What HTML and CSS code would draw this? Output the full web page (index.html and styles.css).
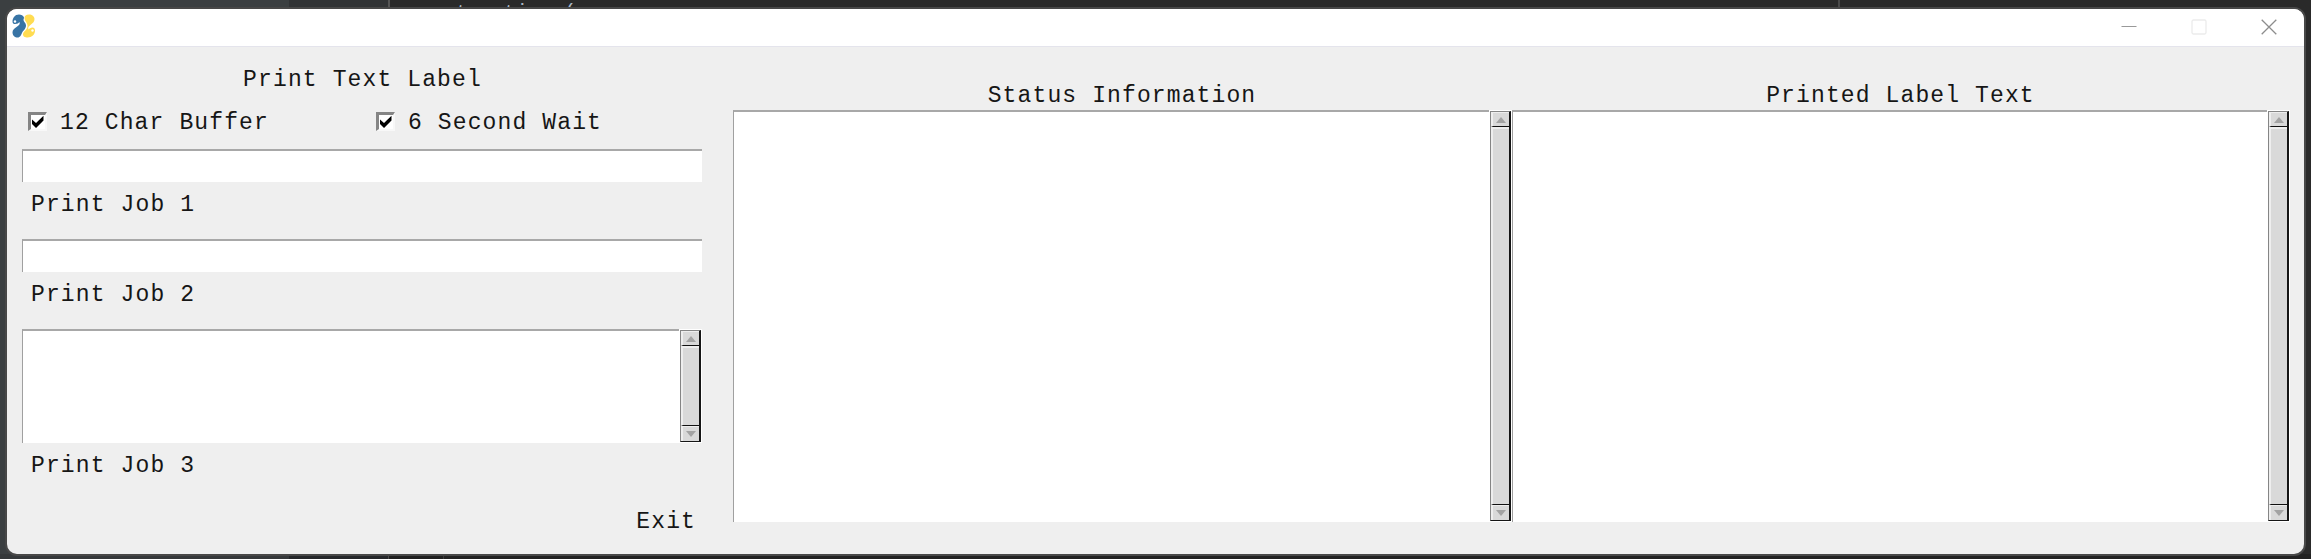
FILE: index.html
```
<!DOCTYPE html>
<html lang="en">
<head>
<meta charset="utf-8">
<title>Print Text Label</title>
<link rel="stylesheet" href="styles.css">
</head>
<body>
<div class="desktop">
  <div class="editor-peek" aria-hidden="true"><span class="gutter">27</span><span class="code">extractions(</span></div>
  <div class="editor-foot"></div>
  <main class="window">
    <header class="titlebar">
      <svg class="logo" width="24" height="24" viewBox="0 0 24 24">
        <path d="M7 .5C3 .5.5 4 .5 7.500c0 2 1.200 2.500 2.500 2.500 2.500 0 3.500-1 4.500-2 .8 2-.5 3.500-3 5C2 14.500.5 16 .5 18.500c0 3 2.500 5 5 5 3 0 3.500-2.500 4.500-4.500 1-2.500 4-4 4-7.500C14 9 11.500 8 11.500 6c0-1 .5-1.500.5-2.500C11.500 1.500 9 .5 7 .5Z" fill="#3874a5"/>
        <path d="M17 .5c-3 0-4.500 1.500-4.500 3.500 0 3 3 4.500 3 8 0 4-4 5-4.500 8-.3 2.500 2 3.500 4.500 3.500 4.500 0 7.500-3 7.500-7 0-2-1-3-2.500-3-2 0-3 1-4 2-1-2 .5-3.500 2.500-5 2-1.500 3.500-3 3.500-5.500C22.500 2.500 20 .5 17 .5Z" fill="#ffdc52"/>
        <circle cx="3" cy="7.500" r="1.200" fill="#fff"/>
        <circle cx="20.500" cy="16.500" r="1.200" fill="#fff"/>
      </svg>
      <div class="controls">
        <svg width="16" height="16" viewBox="0 0 16 16"><path d="M.5 7.500h15" stroke="#999"/></svg>
        <svg width="16" height="16" viewBox="0 0 16 16"><rect x="1" y="1" width="14" height="14" rx="1.500" fill="none" stroke="#ebebeb" stroke-width="1.300"/></svg>
        <svg width="16" height="16" viewBox="0 0 16 16"><path d="m.7.700 14.600 14.600M15.300.700.700 15.300" stroke="#8d8d8d" stroke-width="1.300"/></svg>
      </div>
    </header>
    <div class="content">
      <section class="form">
        <h1 class="heading">Print Text Label</h1>
        <div class="options">
          <div class="option"><span class="check"><svg width="14" height="14" viewBox="0 0 14 14"><path d="M1 4.500v4.500L5 13 12.500 5.500V.8L5 8Z" fill="#000"/></svg></span><span>12 Char Buffer</span></div>
          <div class="option"><span class="check"><svg width="14" height="14" viewBox="0 0 14 14"><path d="M1 4.500v4.500L5 13 12.500 5.500V.8L5 8Z" fill="#000"/></svg></span><span>6 Second Wait</span></div>
        </div>
        <div class="entry"></div>
        <div class="job">Print Job 1</div>
        <div class="entry"></div>
        <div class="job">Print Job 2</div>
        <div class="pane multiline">
          <div class="area"></div>
          <div class="scroll"><span class="arrow"><i class="up"></i></span><span class="thumb"></span><span class="arrow last"><i class="down"></i></span></div>
        </div>
        <div class="job">Print Job 3</div>
        <div class="exit">Exit</div>
      </section>
      <section class="column">
        <h2 class="heading">Status Information</h2>
        <div class="pane">
          <div class="area"></div>
          <div class="scroll"><span class="arrow"><i class="up"></i></span><span class="thumb"></span><span class="arrow last"><i class="down"></i></span></div>
        </div>
      </section>
      <section class="column">
        <h2 class="heading">Printed Label Text</h2>
        <div class="pane">
          <div class="area"></div>
          <div class="scroll"><span class="arrow"><i class="up"></i></span><span class="thumb"></span><span class="arrow last"><i class="down"></i></span></div>
        </div>
      </section>
    </div>
  </main>
</div>
</body>
</html>
```
FILE: styles.css
```
* { box-sizing: border-box; }
body { margin: 0; }
.desktop {
  position: relative;
  width: 2311px;
  height: 559px;
  padding: 7px 5px 3px;
  overflow: hidden;
  background: linear-gradient(90deg, #3b3f41 289px, #313335 289px 388px, #555 388px 390px, #2a2a2a 390px 1838px, #4a4a4a 1838px 1840px, #2a2a2a 1840px);
}
/* Editor behind the window, visible only as a thin strip */
.editor-peek {
  position: absolute;
  left: 310px;
  top: 2px;
  display: flex;
  gap: 98px;
  font: 20px/22px "Liberation Mono", monospace;
  color: #a9b7c6;
}
.gutter { color: #606366; padding-top: 3px; }
.editor-foot {
  position: absolute;
  left: 0;
  right: 0;
  bottom: 0;
  height: 5px;
  background: linear-gradient(90deg, #35383a 289px, #25272a 289px 388px, #4a4a4a 388px 389px, #202020 389px 443px, #3a3a3a 443px 444px, #222 444px);
}
.window {
  position: relative;
  display: flex;
  flex-direction: column;
  width: 2301px;
  height: 549px;
  border: 2px solid #484848;
  border-radius: 12px;
  background: #efefef;
  overflow: hidden;
  font: 23px/26px "Courier New", "Liberation Mono", monospace;
  letter-spacing: 1.12px;
  color: #161616;
}
.titlebar {
  display: flex;
  flex: none;
  justify-content: space-between;
  align-items: flex-start;
  height: 38px;
  padding: 5px 27px 0 5px;
  background: #fff;
  border-bottom: 1px solid #e4e4ec;
}
.controls { display: flex; gap: 54px; padding-top: 5px; }
.controls svg, .logo { display: block; }
.content { display: flex; }
.form { width: 680px; margin: 0 31px 0 15px; }
.heading { margin: 0; font: inherit; text-align: center; white-space: pre; }
.form .heading { padding: 20px 0 0 1px; height: 62px; }
.options { display: flex; height: 40px; padding: 1px 0 0 6px; }
.option { display: flex; flex: none; width: 348px; gap: 13px; white-space: pre; }
.check {
  flex: none;
  width: 19px;
  height: 19px;
  margin-top: 2px;
  background: #fff;
  border: solid;
  border-width: 3px 2px 2px 3px;
  border-color: #858585 #f8f8f8 #f8f8f8 #858585;
}
.check svg { display: block; }
.entry, .area {
  background: #fff;
  border-top: 2px solid #a8a8a8;
  border-left: 1px solid #a0a0a0;
}
.entry { height: 33px; }
.job { height: 57px; padding: 10px 0 0 9px; }
.pane { display: flex; background: #fff; }
.area { flex: 1; }
.multiline { height: 114px; }
.exit { text-align: right; padding-right: 6px; margin-top: 9px; }
.column { width: 779px; }
.column:last-child { width: 778px; }
.column .heading { height: 63px; padding: 36px 1px 0 0; }
.column .pane { height: 412px; }
.scroll {
  display: flex;
  flex-direction: column;
  width: 21px;
  margin: 1px;
  background: #d9d9d9;
  border: 1px solid #858585;
  border-right: 2px solid #151515;
  border-bottom-color: #151515;
}
.arrow {
  display: flex;
  justify-content: center;
  align-items: center;
  height: 15px;
  border-bottom: 1px solid #111;
  border-top: 1px solid #eee;
  border-left: 2px solid #eee;
}
.last { border-bottom: 0; }
.thumb { flex: 1; border-left: 2px solid #eee; border-top: 2px solid #eee; border-bottom: 1px solid #111; }
.up, .down { width: 0; height: 0; border: 5.5px solid transparent; }
.up { border-bottom: 6px solid #a3a3a3; border-top: 0; }
.down { border-top: 6px solid #a3a3a3; border-bottom: 0; }
```
